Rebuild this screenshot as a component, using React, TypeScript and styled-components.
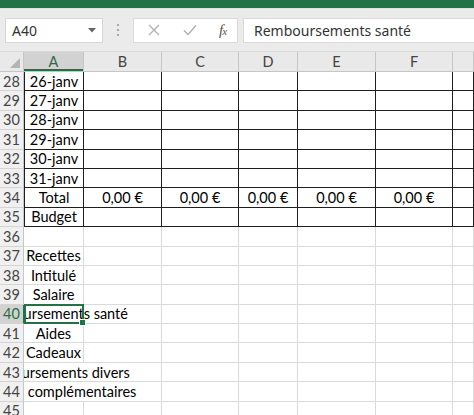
import styled, { createGlobalStyle } from "styled-components";

// GLOBAL
const GlobalStyle = createGlobalStyle`
  html, body {
    margin: 0;
    padding: 0;
    background: #ffffff;
    overflow: hidden;
  }
  body {
    width: 474px;
    height: 415px;
    font-family: "Lato", "Liberation Sans", sans-serif;
  }
`;

// LAYOUT
const CELL_COLS = "60px 78px 77px 59px 78px 77px 1fr";
const ROW_H = "19.4px";

const Window = styled.div`
  width: 474px;
  height: 415px;
  display: flex;
  flex-direction: column;
  overflow: hidden;
  background: #217346;
`;
const TitleStrip = styled.div`
  height: 8px;
  min-height: 8px;
  background: #217346;
  flex-shrink: 0;
`;
const Toolbar = styled.div`
  height: 44px;
  flex-shrink: 0;
  background: #ebebeb;
  display: flex;
  align-items: center;
  padding-left: 5px;
  box-sizing: border-box;
  border-top: 1px solid #e2e2e2;
  border-bottom: 1px solid #d8d8d8;
`;
const NameBox = styled.div`
  width: 98px;
  height: 25px;
  box-sizing: border-box;
  background: #fff;
  border: 1px solid #d6d6d6;
  display: flex;
  align-items: center;
  justify-content: space-between;
  padding: 0 6px 0 6px;
  font-family: "Noto Sans", "Open Sans", sans-serif;
  font-size: 14px;
  color: #333;
`;
const Dots = styled.div`
  width: 30px;
  display: flex;
  flex-direction: column;
  align-items: center;
  gap: 3px;
  span {
    width: 2px;
    height: 2px;
    background: #a8a8a8;
  }
`;
const IconBox = styled.div`
  width: 105px;
  height: 25px;
  box-sizing: border-box;
  background: #fff;
  border: 1px solid #dadada;
  display: grid;
  grid-template-columns: 36px 36px 1fr;
  align-items: center;
  justify-items: center;
  padding-left: 2px;
`;
const FxLabel = styled.span`
  font-family: "Liberation Serif", serif;
  font-style: italic;
  font-size: 15px;
  color: #555;
  letter-spacing: -1px;
  sub {
    font-size: 11px;
    vertical-align: baseline;
  }
`;
const FormulaBar = styled.div`
  margin-left: 5px;
  flex: 1;
  height: 25px;
  box-sizing: border-box;
  background: #fff;
  border: 1px solid #dadada;
  border-right: none;
  display: flex;
  align-items: center;
  padding-left: 10px;
  font-family: "Noto Sans", "Open Sans", sans-serif;
  font-size: 14px;
  color: #333;
`;
const Sheet = styled.div`
  flex: 1;
  display: flex;
  flex-direction: column;
  background: #fff;
`;
const HeaderRow = styled.div`
  display: grid;
  grid-template-columns: 24px ${CELL_COLS};
  height: 19px;
  flex-shrink: 0;
  background: #e9e9e9;
  border-bottom: 1px solid #c6c6c6;
`;
const Corner = styled.div`
  position: relative;
  border-right: 1px solid #c6c6c6;
  &::after {
    content: "";
    position: absolute;
    right: 3px;
    bottom: 3px;
    border-style: solid;
    border-width: 0 0 10px 10px;
    border-color: transparent transparent #b4b4b4 transparent;
  }
`;
const ColHead = styled.div<{ $active?: boolean }>`
  display: flex;
  align-items: center;
  justify-content: center;
  font-size: 14.5px;
  color: ${(p) => (p.$active ? "#2a6b48" : "#444")};
  background: ${(p) => (p.$active ? "#d2d2d2" : "transparent")};
  border-right: 1px solid #c6c6c6;
  box-shadow: ${(p) => (p.$active ? "inset 0 -2px 0 #217346" : "none")};
`;
const Row = styled.div`
  display: grid;
  grid-template-columns: 24px 1fr;
  height: ${ROW_H};
  flex-shrink: 0;
`;
const RowHead = styled.div<{ $active?: boolean }>`
  display: flex;
  align-items: center;
  justify-content: center;
  font-size: 14.5px;
  color: ${(p) => (p.$active ? "#217346" : "#444")};
  background: ${(p) => (p.$active ? "#d2d2d2" : "#f0f0f0")};
  border-right: 1px solid ${(p) => (p.$active ? "#217346" : "#c6c6c6")};
  border-bottom: 1px solid #d4d4d4;
  box-sizing: border-box;
`;
const CellStrip = styled.div`
  display: grid;
  grid-template-columns: ${CELL_COLS};
  overflow-x: clip;
  overflow-y: visible;
  min-width: 0;
`;
const Cell = styled.div<{ $framed?: boolean; $left?: boolean; $noLine?: boolean }>`
  position: relative;
  display: flex;
  align-items: center;
  justify-content: center;
  min-width: 0;
  white-space: nowrap;
  font-size: 14.5px;
  color: #000;
  box-sizing: border-box;
  border-bottom: 1px solid ${(p) => (p.$framed ? "#1e1e1e" : "#dadada")};
  border-left: ${(p) => (p.$left ? "1px solid #1e1e1e" : "none")};
  border-right: 1px solid
    ${(p) => (p.$noLine ? "transparent" : p.$framed ? "#1e1e1e" : "#dadada")};
`;
const Spill = styled.span`
  display: block;
  flex-shrink: 0;
`;
const Selection = styled.div`
  position: absolute;
  left: 0;
  top: -1px;
  right: -1px;
  bottom: -1px;
  border: 2px solid #217346;
  pointer-events: none;
  z-index: 3;
  &::after {
    content: "";
    position: absolute;
    right: -4px;
    bottom: -4px;
    width: 5px;
    height: 5px;
    background: #217346;
    border: 1px solid #fff;
  }
`;

// DATA
type RowData = { n: number; a?: string; sums?: boolean; spill?: boolean };

const rows: RowData[] = [
  { n: 28, a: "26-janv" },
  { n: 29, a: "27-janv" },
  { n: 30, a: "28-janv" },
  { n: 31, a: "29-janv" },
  { n: 32, a: "30-janv" },
  { n: 33, a: "31-janv" },
  { n: 34, a: "Total", sums: true },
  { n: 35, a: "Budget" },
  { n: 36 },
  { n: 37, a: "Recettes" },
  { n: 38, a: "Intitulé" },
  { n: 39, a: "Salaire" },
  { n: 40, a: "Remboursements santé", spill: true },
  { n: 41, a: "Aides" },
  { n: 42, a: "Cadeaux" },
  { n: 43, a: "Remboursements divers", spill: true },
  { n: 44, a: "Revenus complémentaires", spill: true },
  { n: 45 },
];

const letters = ["A", "B", "C", "D", "E", "F", ""];

const CrossIcon = () => (
  <svg width="12" height="12" viewBox="0 0 12 12">
    <path d="M1 1 L11 11 M11 1 L1 11" stroke="#b0b0b0" strokeWidth="1.3" />
  </svg>
);
const CheckIcon = () => (
  <svg width="14" height="12" viewBox="0 0 14 12">
    <path d="M1 6.5 L5 10.5 L13 1.5" stroke="#b0b0b0" strokeWidth="1.4" fill="none" />
  </svg>
);
const Caret = () => (
  <svg width="8" height="5" viewBox="0 0 8 5">
    <path d="M0 0 L8 0 L4 4.5 Z" fill="#666" />
  </svg>
);

export default function App() {
  return (
    <>
      <GlobalStyle />
      <Window>
        <TitleStrip />
        <Toolbar>
          <NameBox>
            <span>A40</span>
            <Caret />
          </NameBox>
          <Dots>
            <span />
            <span />
            <span />
          </Dots>
          <IconBox>
            <CrossIcon />
            <CheckIcon />
            <FxLabel>
              f<sub>x</sub>
            </FxLabel>
          </IconBox>
          <FormulaBar>Remboursements santé</FormulaBar>
        </Toolbar>
        <Sheet>
          <HeaderRow>
            <Corner />
            {letters.map((l, i) => (
              <ColHead key={i} $active={l === "A"}>
                {l}
              </ColHead>
            ))}
          </HeaderRow>
          {rows.map((r) => {
            const framed = r.n <= 35;
            return (
              <Row key={r.n}>
                <RowHead $active={r.n === 40}>{r.n}</RowHead>
                <CellStrip>
                  {letters.map((l, i) => (
                    <Cell
                      key={i}
                      $framed={framed}
                      $left={i === 0 && framed}
                      $noLine={i === 0 && r.spill && r.n !== 40}
                    >
                      {i === 0 && r.a && <Spill>{r.a}</Spill>}
                      {i > 0 && i < 6 && r.sums && "0,00 €"}
                      {i === 0 && r.n === 40 && <Selection />}
                    </Cell>
                  ))}
                </CellStrip>
              </Row>
            );
          })}
        </Sheet>
      </Window>
    </>
  );
}
